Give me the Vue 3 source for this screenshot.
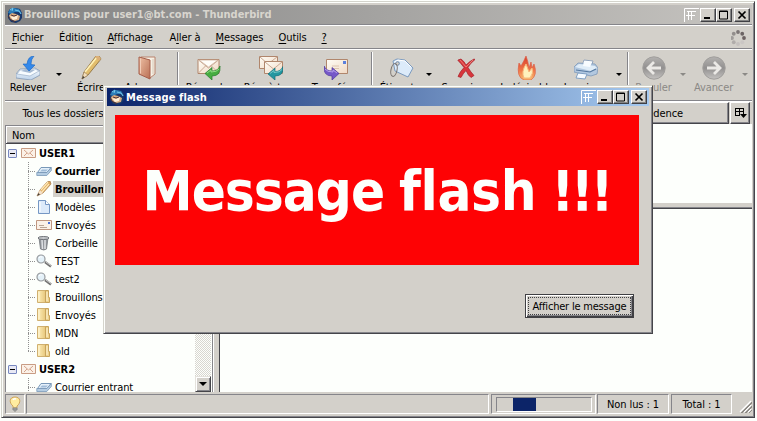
<script setup>
const menus = [
  { k: 'F', rest: 'ichier', w: 47 },
  { pre: 'Éditio', k: 'n', w: 48.5 },
  { k: 'A', rest: 'ffichage', w: 62 },
  { pre: 'A', k: 'l', rest: 'ler à', w: 46 },
  { k: 'M', rest: 'essages', w: 63 },
  { k: 'O', rest: 'utils', w: 43 },
  { k: '?', w: 20 },
]
const tools = [
  { icon: 'get', label: 'Relever' },
  { arrow: true },
  { icon: 'write', label: 'Écrire' },
  { icon: 'book', label: 'Adresses' },
  { sep: true },
  { icon: 'reply', label: 'Répondre' },
  { icon: 'replyall', label: 'Rép. à tous' },
  { icon: 'forward', label: 'Transférer' },
  { sep: true },
  { icon: 'tag', label: 'Étiqueter' },
  { arrow: true },
  { icon: 'delete', label: 'Supprimer' },
  { icon: 'junk', label: 'Indésirable' },
  { icon: 'print', label: 'Imprimer' },
  { arrow: true },
  { sep: true },
  { icon: 'back', label: 'Reculer', off: true },
  { arrow: true, off: true },
  { icon: 'next', label: 'Avancer', off: true },
  { arrow: true, off: true },
]
// horizontal centre of every slot, measured from the toolbar's left edge
const centres = [23, 53.5, 86, 141.5, 173, 204, 266, 331, 367, 397, 424, 462, 522, 581, 613.5, 623, 648.5, 677.5, 708.5, 739.5]
const slots = tools.map((t, i) => {
  const w = t.sep ? 2 : t.arrow ? 6 : 24
  const prev = i ? centres[i - 1] + (tools[i - 1].sep ? 1 : tools[i - 1].arrow ? 3 : 12) : 0
  return { ...t, w, gap: centres[i] - w / 2 - prev }
})
const rows = [
  { root: true, icon: 'mail', name: 'USER1' },
  { icon: 'inbox', name: 'Courrier entrant', bold: true },
  { icon: 'pencil', name: 'Brouillons', bold: true, sel: true },
  { icon: 'page', name: 'Modèles' },
  { icon: 'sent', name: 'Envoyés' },
  { icon: 'trash', name: 'Corbeille' },
  { icon: 'search', name: 'TEST' },
  { icon: 'search', name: 'test2' },
  { icon: 'folder', name: 'Brouillons' },
  { icon: 'folder', name: 'Envoyés' },
  { icon: 'folder', name: 'MDN' },
  { icon: 'folder', name: 'old', last: true },
  { root: true, icon: 'mail', name: 'USER2' },
  { icon: 'inbox', name: 'Courrier entrant' },
]
const dots = Array.from({ length: 8 }, (_, i) => {
  const a = (i * Math.PI) / 4
  return { x: 7 + 6 * Math.cos(a), y: 8 + 6 * Math.sin(a), c: ['#6c6262', '#cac6c4', '#c4c0be', '#b0acaa', '#a09c9a', '#928e8c', '#7c7676', '#6c6464'][i] }
})
</script>

<template>
  <svg class="defs" width="0" height="0">
    <defs>
      <linearGradient id="gPaper" x1="0" y1="0" x2="1" y2="1"><stop offset="0" stop-color="#fffdf6" /><stop offset="1" stop-color="#f0d9c4" /></linearGradient>
      <linearGradient id="gBook" x1="0" y1="0" x2="1" y2="1"><stop offset="0" stop-color="#eec0a4" /><stop offset="1" stop-color="#b96f54" /></linearGradient>
      <linearGradient id="gTray" x1="0" y1="0" x2="0" y2="1"><stop offset="0" stop-color="#fff" /><stop offset="1" stop-color="#bcd2ea" /></linearGradient>
      <linearGradient id="gFire" x1="0" y1="0" x2="0" y2="1"><stop offset="0" stop-color="#d83c2c" /><stop offset=".6" stop-color="#f07848" /><stop offset="1" stop-color="#f8c070" /></linearGradient>
      <linearGradient id="gBall" x1="0" y1="0" x2="0" y2="1"><stop offset="0" stop-color="#b4b2b0" /><stop offset=".5" stop-color="#929090" /><stop offset="1" stop-color="#c4c2c0" /></linearGradient>
      <linearGradient id="gFold" x1="0" y1="0" x2="1" y2="0"><stop offset="0" stop-color="#fff0bc" /><stop offset="1" stop-color="#e4c274" /></linearGradient>
    </defs>
    <symbol id="bird" viewBox="0 0 16 16">
      <path d="M1 5 3 2l3-1 3 0 4 1 2 4v5l-2 3-4 2-5-1-3-4z" fill="#17386c" />
      <path d="M1 6 3 2l4-1 5 1 3 5-3-2-4 0-4 2z" fill="#2b7db8" />
      <path d="M3 3 6 1l-1 3M8 3l4 1 2 3" stroke="#74c8ec" fill="none" />
      <path d="m2 8 3-2 4 1 4 2-1 4-4 1-5-2z" fill="#d8ac80" /><path d="m3 9 4 1 4-2-1 4-4 1z" fill="#fff0d8" />
      <path d="m1 9 3 4 4 2M4 8l3 1 3-1" stroke="#513538" fill="none" />
    </symbol>
    <symbol id="get" viewBox="0 0 24 24">
      <path d="M4 13 0 18v4l15 2 9-5v-4l-5-3z" fill="url(#gTray)" stroke="#8499b4" stroke-width=".8" />
      <path d="m4 14-3 4 13 2 9-5-4-2z" fill="#f8fcff" stroke="#9eb2ca" stroke-width=".7" /><path d="m5 15 9 2 5-3-9-1z" fill="#a6bad2" />
      <path d="M18 0Q12 0 11 8H7l6 7 6-6-4-.5Q15 3 18 0z" fill="#3489ea" stroke="#1764c4" stroke-width=".6" />
    </symbol>
    <symbol id="write" viewBox="0 0 24 24">
      <path d="m3 23 2-7L17 0l3 0 2 3L9 19z" fill="#e2bd6c" stroke="#8d7040" stroke-width=".9" />
      <path d="M6 16 18 1" stroke="#fff2b8" stroke-width="1.6" /><path d="m3 23 2-7 4 3z" fill="#f4dfba" stroke="#8d7050" stroke-width=".5" /><path d="m3 23 1-3 1.500 1.300z" fill="#333" /><path d="m17 0 3 0 2 3-2 2-4-4z" fill="#dcb078" />
    </symbol>
    <symbol id="book" viewBox="0 0 24 24">
      <path d="M6 1h14v17l-5 4z" fill="#f6f0e4" stroke="#b8826c" /><path d="M18 3v15" stroke="#c8b8a8" stroke-width=".7" />
      <path d="m4 1 11 3v19L4 18z" fill="url(#gBook)" stroke="#a65e4a" /><path d="M5.500 2.500v15" stroke="#f2cdb8" />
    </symbol>
    <symbol id="env" viewBox="0 0 24 24">
      <path d="M1 3.500h21v14H1z" fill="url(#gPaper)" stroke="#b0866c" /><path d="m1.500 4 10 8 10-8M1.500 17l7-7M21.500 17l-7-7" fill="none" stroke="#c9a892" /><path d="m2 4 9.500 7L21 4z" fill="#fffdf8" stroke="#c9a892" stroke-width=".7" />
    </symbol>
    <symbol id="reply" viewBox="0 0 24 24">
      <use href="#env" width="24" height="24" /><path d="m8 17.500 7-6v3.500q6 0 8-5 1 10-8 10v4z" fill="#46ac40" stroke="#257c2c" stroke-width=".7" /><path d="m10 17 4-3v2q6 0 8-3" fill="none" stroke="#91dc83" />
    </symbol>
    <symbol id="replyall" viewBox="0 0 24 24">
      <path d="M.5.500h18v12H.5z" fill="url(#gPaper)" stroke="#b0866c" /><path d="m1 1 8 7 9-7" fill="none" stroke="#c9a892" />
      <path d="M5.500 5.500h18v12h-18z" fill="url(#gPaper)" stroke="#b0866c" /><path d="m6 6 8.500 7L23 6" fill="none" stroke="#c9a892" />
      <path d="m9 18 7-6v3.500q6 0 8-5 1 9.500-8 9.500v4z" fill="#2396a0" stroke="#16707c" stroke-width=".7" /><path d="m11 17.500 4-3v2q6 0 8-3" fill="none" stroke="#74c8c8" />
    </symbol>
    <symbol id="forward" viewBox="0 0 24 24">
      <path d="M2.500 3.500h21v14h-21z" fill="url(#gPaper)" stroke="#b0866c" /><path d="M19 5h3v3h-3z" fill="#5c80dc" /><path d="M8 10h7M9 12.500h6" stroke="#dcc4b0" />
      <path d="M15 17.500 8 11.500V15q-6 0-8-5-1 10 8 10v4z" fill="#7558c8" stroke="#4e369c" stroke-width=".7" /><path d="m13 17-4-3v2q-6 0-8-3" fill="none" stroke="#b6a0ec" />
    </symbol>
    <symbol id="tag" viewBox="0 0 24 24">
      <path d="m3 5 4-2 8 1 8 8-5 9-13-6z" fill="#dcebfa" stroke="#7b9abf" /><path d="m5 6 3-2 7 1 6 6" fill="none" stroke="#fff" /><circle cx="7.500" cy="7.500" r="1.800" fill="#d4d0c8" stroke="#6d87a8" />
      <ellipse cx="4" cy="14" rx="3" ry="6.500" fill="none" stroke="#77706c" transform="rotate(12 4 14)" />
    </symbol>
    <symbol id="delete" viewBox="0 0 24 24"><path d="M3 4l3-1q3 2 5 6 4-4 8-6l1 .5q-5 4-7 8 3 5 6 8l-3 2q-3-2-5-7-3 3-5 7l-3-1q2-5 6-9-3-4-6-7z" fill="#d8363c" stroke="#a51f28" stroke-width=".7" /><path d="m5 4 6 7 7-7" fill="none" stroke="#f28a80" stroke-width=".8" /></symbol>
    <symbol id="junk" viewBox="0 0 24 24"><path d="M11 0q-2 5-5 10l-2-3q-3 14 5 17h7q7-5 3-16l-2 4-1-6-2 6q-1-7-3-12z" fill="url(#gFire)" stroke="#dc6048" stroke-width=".7" /><path d="M11 8q-5 8-2 14h6q4-5 2-10l-3 4z" fill="#fff1bc" stroke="#f6b87c" /></symbol>
    <symbol id="print" viewBox="0 0 24 24">
      <path d="M8 10 10 4l9 1-2 6z" fill="#fff" stroke="#91a4bd" /><path d="m0 11 4-4 17 1 3 4-1 6-6 2-17-4z" fill="#b2c8e0" stroke="#7d98b8" stroke-width=".8" /><path d="m1 11 4-3 16 2 2 2-6 3z" fill="#e0edf8" /><path d="M9 10l1-5 8 1-2 5z" fill="#f8fcff" /><path d="m2 14 14 2 6-3" stroke="#5579a0" fill="none" stroke-width="1.200" /><path d="m4 17 9 1-2 5-9-1z" fill="#f6fbff" stroke="#80a0c4" />
    </symbol>
    <symbol id="back" viewBox="0 0 24 24"><circle cx="12" cy="12" r="11.200" fill="url(#gBall)" stroke="#a09e9c" /><path d="M19 12H6M12 6l-6 6 6 6" fill="none" stroke="#ebe9e6" stroke-width="2.800" /></symbol>
    <symbol id="next" viewBox="0 0 24 24"><circle cx="12" cy="12" r="11.200" fill="url(#gBall)" stroke="#a09e9c" /><path d="M5 12h13M12 6l6 6-6 6" fill="none" stroke="#ebe9e6" stroke-width="2.800" /></symbol>
    <symbol id="mail" viewBox="0 0 16 16"><path d="M.5 3.500h14v9H.5z" fill="#fbf1e7" stroke="#c89c84" /><path d="m3 5 4.500 4L12 5M3 11l3-3M12 11l-3-3" fill="none" stroke="#d3a28a" /></symbol>
    <symbol id="inbox" viewBox="0 0 16 16"><path d="m5 4.500 10 0-4 5H1.500z" fill="#e4f0fa" stroke="#7898b8" /><path d="M.8 9.500v3h10l4.500-5v-3l-4.500 5z" fill="#b4cce2" stroke="#7898b8" stroke-width=".8" /><path d="M6 6.500h6l-2 2H4z" fill="#a0bcd8" /></symbol>
    <symbol id="pencil" viewBox="0 0 16 16"><path d="m1 15 3-6 7-8 3-1 1 3-8 9z" fill="#dca65c" stroke="#a67a48" stroke-width=".7" /><path d="m5 9 7-8M6 11l7-8" stroke="#ffeab8" stroke-width="1.200" /><path d="m1 15 3-6 3 3z" fill="#f5e2ca" /><path d="m1 15 1.500-3L4 13.500z" fill="#443c34" /></symbol>
    <symbol id="page" viewBox="0 0 16 16"><path d="M2.500 1.500h7l4 4v9h-11z" fill="#dceafa" stroke="#7597c4" /><path d="M9.500 1.500v4h4" fill="#fff" stroke="#7597c4" /><path d="M4 3v10" stroke="#fff" /></symbol>
    <symbol id="sent" viewBox="0 0 16 16"><path d="M.5 3.500h15v9H.5z" fill="#fbf1e7" stroke="#c09680" /><path d="M12 5h2v2h-2z" fill="#4870d8" /><path d="M3 8.500h5M4 10.500h7" stroke="#b9a596" /></symbol>
    <symbol id="trash" viewBox="0 0 16 16"><path d="m3 3 1.500 11q3.500 2 6 0L12 3z" fill="#91959a" stroke="#75797e" stroke-width=".8" /><path d="m6 5 .5 9M9 5v9" stroke="#dfe2e5" stroke-width="1.500" /><ellipse cx="7.500" cy="3" rx="5.500" ry="1.500" fill="#c7cacd" stroke="#6e7277" /></symbol>
    <symbol id="search" viewBox="0 0 16 16"><path d="m9 9 6 4.500" stroke="#747474" stroke-width="2.500" /><path d="m10 9 5 3.500" stroke="#d0d0d0" /><circle cx="5" cy="6" r="4" fill="#e4f1f8" stroke="#969a9d" stroke-width="1.200" /><path d="M3 5q1-2 3-1" stroke="#fff" fill="none" /></symbol>
    <symbol id="folder" viewBox="0 0 16 16"><path d="M1.500 1.500h9v12h-9z" fill="url(#gFold)" stroke="#d0b070" /><path d="M9.500 1.500h3v7h1v5h-4z" fill="#edd18b" stroke="#c8a45c" /><path d="M3 3v9M11 3v9" stroke="#fff6d8" /></symbol>
    <symbol id="bulb" viewBox="0 0 12 16"><path d="M6 1C0 1 0 7 4 10v2h4v-2c4-3 4-9-2-9z" fill="#ffeca0" stroke="#d0a65c" /><path d="M4 4q1-2 3-1" fill="none" stroke="#fff" stroke-width="1.500" /><path d="M4 12h4v2H4zM5 15h2" fill="#a8a8a8" stroke="#858585" /></symbol>
    <symbol id="ff" viewBox="0 0 16 14"><path d="M.5 14V.5H15M3 3.500h9M4.500 3v9M2 7.500h9M7.500 3v9" fill="none" stroke="#fff" /></symbol>
    <symbol id="min" viewBox="0 0 12 10"><path d="M2 7h6v2H2z" /></symbol>
    <symbol id="max" viewBox="0 0 12 10"><path d="M1.500 1h8v8h-8zM1 1.500h9" fill="none" stroke="#000" /></symbol>
    <symbol id="close" viewBox="0 0 12 10"><path d="m2.500 1.500 7 7M9.500 1.500l-7 7" stroke="#000" stroke-width="1.700" /></symbol>
  </svg>

  <div class="window frame">
    <header class="title inactive">
      <svg class="logo"><use href="#bird" /></svg><span class="caption">Brouillons pour user1@bt.com - Thunderbird</span>
      <svg class="ff"><use href="#ff" /></svg>
      <button v-for="b in ['min', 'max', 'close']" :key="b" :class="['wb', b]"><svg width="12" height="10"><use :href="'#' + b" /></svg></button>
    </header>

    <nav class="menubar">
      <span v-for="m in menus" :key="m.k" class="menu" :style="{ width: m.w + 'px' }">{{ m.pre }}<u>{{ m.k }}</u>{{ m.rest }}</span>
      <svg class="throbber" width="16" height="16"><circle v-for="(d, i) in dots" :key="i" :cx="d.x" :cy="d.y" r="1.900" :fill="d.c" /></svg>
    </nav>

    <div class="toolbar">
      <div v-for="(t, i) in slots" :key="i" :class="['slot', { off: t.off, sep: t.sep }]" :style="{ width: t.w + 'px', marginLeft: t.gap + 'px' }">
        <svg v-if="t.icon" width="24" height="24"><use :href="'#' + t.icon" /></svg>
        <span v-if="t.label" class="lbl">{{ t.label }}</span>
        <i v-if="t.arrow" class="tri"></i>
      </div>
    </div>

    <main class="body">
      <section class="left">
        <div class="mode">Tous les dossiers</div>
        <div class="treebox">
          <div class="treehead">Nom</div>
          <div class="treebody">
            <div class="tree">
              <div v-for="(r, i) in rows" :key="i" :class="['row', { root: r.root, last: r.last }]">
                <i v-if="r.root" class="exp"></i><i v-else class="branch"></i>
                <svg width="16" height="16"><use :href="'#' + r.icon" /></svg>
                <span :class="['name', { bold: r.bold || r.root, sel: r.sel }]">{{ r.name }}</span>
              </div>
            </div>
            <div class="scroll"><button class="down"><i class="tri"></i></button></div>
          </div>
        </div>
      </section>
      <section class="right">
        <div class="cols"><div class="col">Precedence</div><div class="picker"><svg width="13" height="12"><path d="M1 1.500h9M1.500 1v8M1 4.500h9M5.500 1v8M1 8.500h5M9.500 1v6" fill="none" stroke="#000" /><path d="M6 7h7l-3.500 4z" /></svg></div></div>
        <div class="list"></div>
        <div class="splitter"></div>
        <div class="preview"></div>
      </section>
    </main>

    <footer class="status">
      <div class="panel tip"><svg width="12" height="16"><use href="#bulb" /></svg></div>
      <div class="panel msg"></div>
      <div class="panel prog"><div class="bar"><div class="chunk"></div></div></div>
      <div class="panel unread">Non lus : 1</div>
      <div class="panel total">Total : 1</div>
      <svg class="grip" width="13" height="13"><path d="M1 12 12 1M5 12l7-7M9 12l3-3" stroke="#fff" stroke-width="1.200" /><path d="M2 13 13 2M3 13l10-10M6 13l7-7M7 13l6-6M10 13l3-3" stroke="#85827d" stroke-width=".9" /></svg>
    </footer>
  </div>

  <div class="dialog frame">
    <header class="title active">
      <svg class="logo"><use href="#bird" /></svg><span class="caption">Message flash</span>
      <svg class="ff"><use href="#ff" /></svg>
      <button v-for="b in ['min', 'max', 'close']" :key="b" :class="['wb', b]"><svg width="12" height="10"><use :href="'#' + b" /></svg></button>
    </header>
    <div class="flash"><p>Message <span class="w2">flash</span> <span class="w3">!!!</span></p></div>
    <div class="actions"><button class="show"><span>Afficher le message</span></button></div>
  </div>
</template>

<style>
body { background: #fdfffc; overflow: hidden; }
</style>

<style scoped>
.window, .dialog { box-sizing: border-box; font: 11px/14px "DejaVu Sans Condensed", "DejaVu Sans", sans-serif; font-stretch: condensed; letter-spacing: -.1px; color: #000; background: #d3d0ca; display: flex; flex-direction: column; }
.window *, .dialog * { box-sizing: border-box; }
.defs { position: absolute; }
.frame { border: 1px solid; border-color: #d4d4cc #45454a #45454a #d4d4cc; box-shadow: inset 1px 1px #fdfffc, inset -1px -1px #85858a; }
.window { width: 754px; height: 417px; margin: 1px 0 0 1px; padding: 3px 2px 2px 3px; }
.dialog { position: absolute; left: 103px; top: 85px; width: 550px; height: 249px; padding: 2px 3px; }
.title { display: flex; align-items: center; height: 18px; flex: none; font-weight: bold; }
.inactive { height: 19px; background: linear-gradient(90deg, #828282, #c6c4c0); color: #d8d5ce; }
.active { background: linear-gradient(90deg, #0b246a, #a6caf0); color: #fff; }
.logo { width: 16px; height: 16px; margin-left: 2px; }
.caption { margin-left: 1px; flex: 1; white-space: nowrap; }
.inactive .caption { letter-spacing: -.03px; }
.active .caption { letter-spacing: .1px; padding-top: 1px; }
.ff { width: 16px; height: 14px; }
button { font: inherit; letter-spacing: inherit; color: inherit; padding: 0; border: 0; background: #d3d0ca; }
.wb { width: 16px; height: 14px; display: flex; align-items: center; justify-content: center; border: 1px solid; border-color: #fff #404044 #404044 #fff; box-shadow: inset -1px -1px #858585; }
.wb.close { margin: 0 2px; }
.menubar { display: flex; align-items: center; height: 25px; padding: 2px 5px 0 7px; border-top: 1px solid #85858a; border-bottom: 1px solid #85858a; box-shadow: inset 0 1px #fff, 0 1px #fff; flex: none; }
.menu { white-space: nowrap; flex: none; }
u { text-underline-offset: 2px; text-decoration-thickness: 1px; }
.throbber { margin-left: auto; }
.toolbar { display: flex; height: 52px; padding-top: 6px; border-bottom: 1px solid #85858a; box-shadow: inset 0 1px #fff, 0 1px #fff; flex: none; }
.slot { display: flex; flex-direction: column; align-items: center; flex: none; height: 42px; }
.slot svg { flex: none; margin-top: 1px; overflow: visible; }
.lbl { white-space: nowrap; line-height: 15px; }
.off { color: #8b8986; }
.sep { height: 43px; margin-top: -3px; border-left: 1px solid #85858a; background: #fff; }
.tri { width: 0; height: 0; border: 3px solid transparent; border-top-color: currentColor; border-bottom: 0; }
.slot .tri { margin-top: 18px; }
.body { display: flex; flex: 1; min-height: 0; }
.left { width: 214px; display: flex; flex-direction: column; flex: none; }
.mode { height: 24px; padding: 6px 0 0 17.500px; flex: none; white-space: nowrap; }
.treebox { flex: 1; min-height: 0; display: flex; flex-direction: column; width: 208px; border: 1px solid #85858a; border-bottom: 0; box-shadow: 1px 0 #fff; }
.treehead { height: 18px; padding: 3px 0 0 6px; flex: none; border-bottom: 1px solid #45454a; box-shadow: inset 1px 1px #fff, inset 0 -1px #85858a; }
.treebody { flex: 1; min-height: 0; display: flex; background: #fdfffc; overflow: hidden; }
.tree { flex: 1; }
.row { display: flex; align-items: center; height: 18px; padding-left: 22px; }
.row svg, .exp, .branch { flex: none; }
.root { padding-left: 2px; }
.exp { width: 9px; height: 9px; border: 1px solid #7888c0; border-radius: 1px; background: linear-gradient(#000, #000) center / 5px 1px no-repeat, #e8e9f4; margin-right: 4px; }
.branch { width: 8px; height: 18px; background: repeating-linear-gradient(180deg, #909090 0 1px, transparent 1px 2px) left top / 1px 18px no-repeat, repeating-linear-gradient(90deg, #909090 0 1px, transparent 1px 2px) left 9px / 7px 1px no-repeat; }
.last .branch { background-size: 1px 10px, 7px 1px; }
.name { height: 16px; line-height: 17px; margin-left: 1px; padding: 0 2px; white-space: nowrap; }
.root .name { margin-left: 0; }
.bold { font-weight: bold; }
.sel { background: #d3d0ca; }
.scroll { width: 17px; flex: none; border-right: 1px solid #fdfffc; display: flex; align-items: flex-end; background: repeating-conic-gradient(#d8d6d0 0 25%, #fdfffc 0 50%) 0 0 / 2px 2px; }
.down { width: 16px; height: 16px; display: grid; place-items: center; background: #d3d0ca; border: 1px solid; border-color: #e4e2dc #45454a #45454a #e4e2dc; box-shadow: inset 1px 1px #fff, inset -1px -1px #85858a; }
.down .tri { border-width: 4px 4px 0; }
.right { flex: 1; display: flex; flex-direction: column; min-width: 0; background: #fdfffc; margin-top: 1px; }
.cols { display: flex; height: 22px; background: #d3d0ca; flex: none; }
.col, .picker { border: 1px solid; border-color: #fff #45454a #45454a #fff; box-shadow: inset -1px -1px #85858a; }
.col { flex: 1; padding: 4px 45px 0 0; text-align: right; }
.picker { width: 20px; margin: 0 2px 0 1px; display: grid; place-items: center; }
.list { height: 79px; border-left: 1px solid #45454a; }
.splitter { height: 6px; background: #d3d0ca; border-bottom: 1px solid #45454a; box-shadow: inset 0 -1px #85858a; }
.preview { flex: 1; border-left: 1px solid #45454a; }
.status { display: flex; height: 23px; padding: 2px 0 1px; flex: none; }
.panel { border: 1px solid; border-color: #85858a #fff #fff #85858a; display: flex; align-items: center; justify-content: center; white-space: nowrap; flex: none; }
.tip { width: 20px; margin-right: 1px; }
.msg { width: 463px; margin-right: 2px; }
.prog { width: 105px; margin-right: 1px; }
.bar { width: 96px; height: 15px; padding-left: 16px; border: 1px solid; border-color: #85858a #fff #fff #85858a; }
.chunk { width: 23px; height: 13px; background: #0c2468; }
.unread { width: 72px; margin-right: 2px; padding-top: 1px; }
.total { width: 61px; padding-top: 1px; }
.grip { margin: 6px 0 0 auto; }
.flash { margin: 9px 0 0 8px; width: 524px; height: 150px; padding: 1px 0 0 27.500px; background: #fe0204; color: #fdfffc; font-size: 56px; line-height: 150px; font-weight: bold; letter-spacing: -1px; word-spacing: -1.500px; white-space: nowrap; }
.flash p { margin: 0; }
.w2 { letter-spacing: -.4px; }
.w3 { letter-spacing: -3.300px; }
.actions { display: flex; justify-content: flex-end; margin: 29px 15px 0 0; }
.show { width: 109px; height: 24px; padding: 2px; border: 1px solid #404044; box-shadow: inset 1px 1px #fff, inset -1px -1px #404044, inset -2px -2px #85858a; }
.show span { display: block; height: 18px; width: 103px; line-height: 17px; letter-spacing: -.2px; border: 1px dotted #404044; white-space: nowrap; text-align: center; }
</style>
